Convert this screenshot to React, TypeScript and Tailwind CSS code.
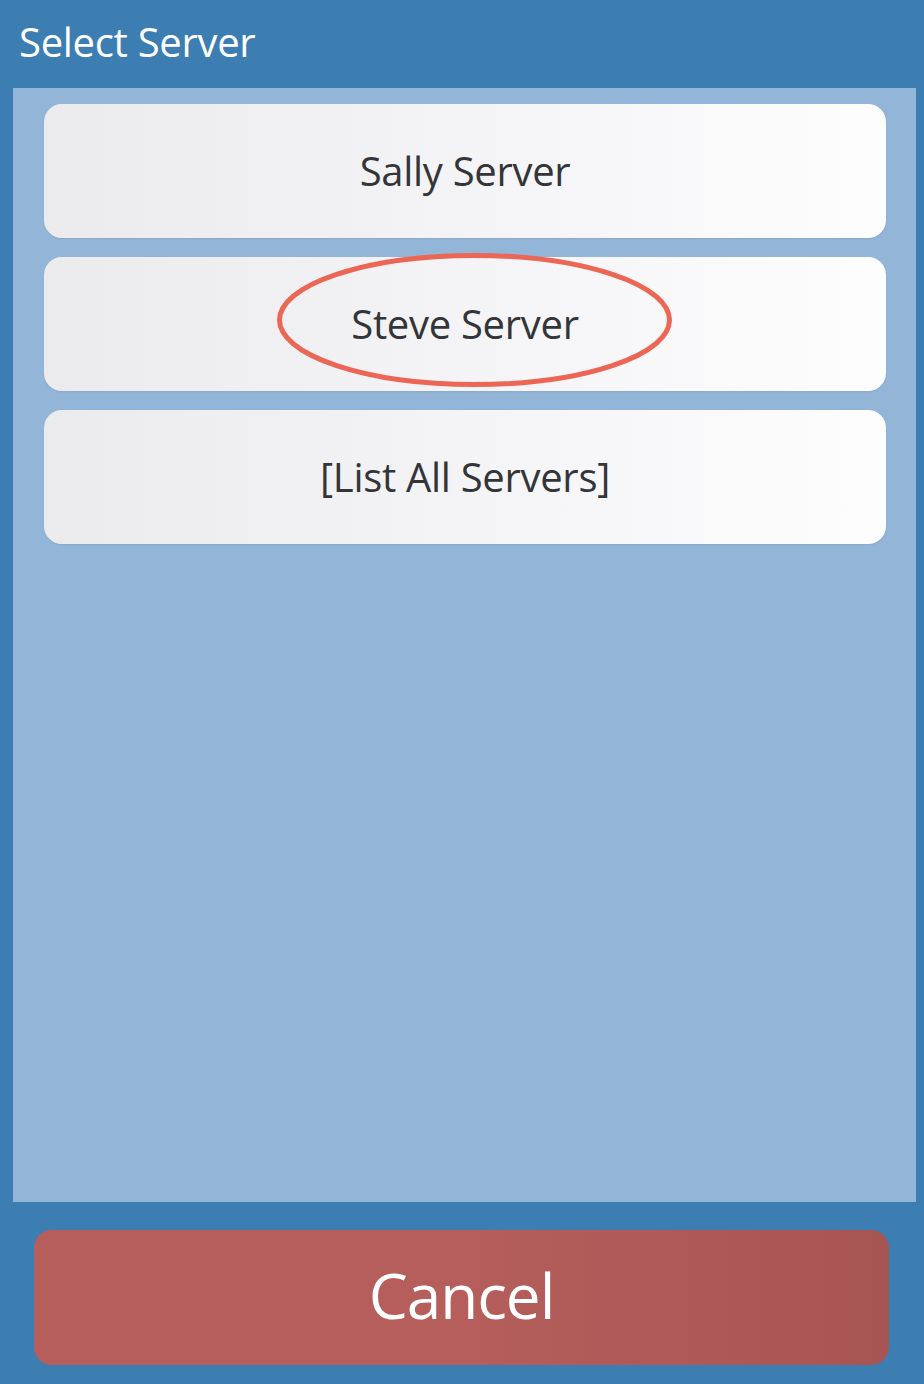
export default function App() {
  const servers = ["Sally Server", "Steve Server", "[List All Servers]"];

  return (
    <div
      className="flex h-[1384px] w-[924px] flex-col bg-[#3c7db2]"
      style={{ fontFamily: '"Open Sans", "Noto Sans", sans-serif' }}
    >
      <div className="flex h-[88px] items-center px-[19px] pb-[4px]">
        <h1 className="text-[40px] leading-none tracking-[-0.3px] text-white">
          Select Server
        </h1>
      </div>

      <div className="ml-[13px] mr-[8px] flex h-[1114px] flex-col gap-[19px] bg-[#93b6d8] pl-[31px] pr-[30px] pt-[16px]">
        {servers.map((name, i) => (
          <div key={name} className="relative">
            <button
              type="button"
              className="flex h-[134px] w-full items-center justify-center rounded-[18px] bg-gradient-to-r from-[#ebebee] to-[#fdfdfe] text-[40px] tracking-[-0.3px] text-[#333538] shadow-[0_1px_2px_rgba(0,0,0,0.08)]"
            >
              {name}
            </button>
            {i === 1 ? (
              <svg
                className="pointer-events-none absolute left-[230px] top-[-7px]"
                width="400"
                height="140"
                viewBox="0 0 400 140"
              >
                <ellipse
                  cx="200.5"
                  cy="70"
                  rx="195"
                  ry="64.5"
                  fill="none"
                  stroke="#ec6656"
                  strokeWidth="5"
                />
              </svg>
            ) : null}
          </div>
        ))}
      </div>

      <div className="ml-[34px] mr-[35px] mt-[28px]">
        <button
          type="button"
          className="flex h-[135px] w-full items-center justify-center rounded-[18px] bg-gradient-to-r from-[#b55e5c] via-[#b55e5c] to-[#a75553] pb-[4px] text-[62px] tracking-[-1px] text-white"
        >
          Cancel
        </button>
      </div>
    </div>
  );
}
